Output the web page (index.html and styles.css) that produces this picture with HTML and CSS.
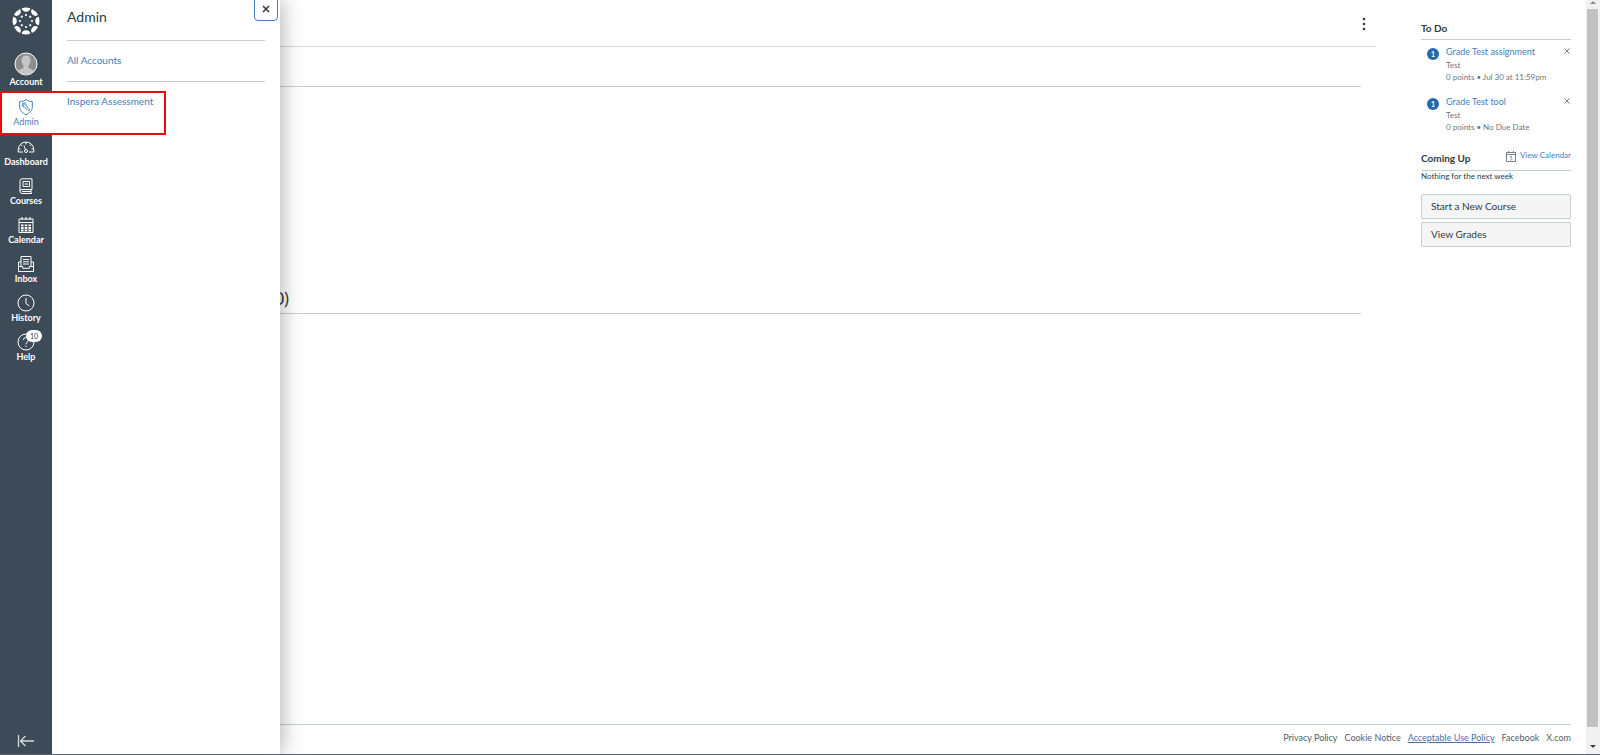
FILE: index.html
```
<!doctype html>
<html lang="en">
<head>
	<meta charset="utf-8">
	<meta name="viewport" content="width=device-width, initial-scale=1.0">
	<title>Dashboard</title>
	<link rel="stylesheet" href="styles.css">
</head>
<body>
<nav class="menu">
	<a href="#" class="logo" aria-label="Canvas">
		<svg width="28" height="28" viewBox="-14 -14 28 28" fill="#fff">
			<defs>
				<g id="petal">
					<path d="M-4.300 -12.700A13.400 13.400 0 0 1 4.300 -12.700A4.400 4.400 0 0 1 -4.300 -12.700Z"/>
					<circle cx="0" cy="-6" r="1.1"/>
				</g>
			</defs>
			<use href="#petal"/>
			<use href="#petal" transform="rotate(45)"/>
			<use href="#petal" transform="rotate(90)"/>
			<use href="#petal" transform="rotate(135)"/>
			<use href="#petal" transform="rotate(180)"/>
			<use href="#petal" transform="rotate(225)"/>
			<use href="#petal" transform="rotate(270)"/>
			<use href="#petal" transform="rotate(315)"/>
		</svg>
	</a>
	<a href="#" class="item account">
		<svg width="24" height="24" viewBox="0 0 24 24">
			<circle cx="12" cy="12" r="11" fill="#8d8d8d" stroke="#fff"/>
			<path d="M12 3.500c-3 0-4.600 2.200-4.400 5.300.1 2.300.9 3.800 2 4.900v1.700c-.6 1.300-4 1.500-5.800 3.500A11 11 0 0 0 20.200 18.900c-1.800-2-5.200-2.200-5.800-3.500v-1.700c1.100-1.100 1.900-2.600 2-4.900.2-3.100-1.400-5.300-4.400-5.300z" fill="#c6c6c6"/>
		</svg>
		<span>Account</span>
	</a>
	<a href="#" class="item active">
		<svg width="18" height="18" viewBox="0 0 18 18" fill="none" stroke="#3f7fc0">
			<path d="M9 1.500C7 3 5 3.600 2.700 3.600v5.200c0 3.700 2.600 6.300 6.300 7.900 3.700-1.600 6.300-4.200 6.300-7.900V3.600C13 3.600 11 3 9 1.500z"/>
			<path d="M5.500 5.500a2.200 2.200 0 0 1 3.600 2.200l3.300 3.400c.8 1-.5 2.200-1.400 1.400L7.700 9.200a2.200 2.200 0 0 1-2.600-2.500l1.400 1 1-1z"/>
		</svg>
		<span>Admin</span>
	</a>
	<a href="#" class="item">
		<svg width="18" height="18" viewBox="0 0 18 18" fill="none" stroke="#fff">
			<path d="M6 14H1.200v-2.200a7.800 7.800 0 0 1 15.600 0V14H12M9 4v2.500M3.700 6.400l1.700 1.700M14.300 6.400l-1.700 1.700M1.500 11h2M14.500 11h2M7 7.500l1.600 4.500"/>
			<circle cx="9" cy="13" r="1.500"/>
		</svg>
		<span>Dashboard</span>
	</a>
	<a href="#" class="item">
		<svg width="18" height="18" viewBox="0 0 18 18" fill="none" stroke="#fff">
			<path d="M15 12.500V1.800H5Q3 1.800 3 4v10.200q0 2.300 2 2.300h10M15 12.500H5q-2 0-2 1.700M14 12.500v4M5 14.500h9"/>
			<path d="M6 4.500h6.500v5H6zM7.500 7h3.500"/>
		</svg>
		<span>Courses</span>
	</a>
	<a href="#" class="item">
		<svg width="18" height="18" viewBox="0 0 18 18" fill="none" stroke="#fff">
			<path d="M2 3h14v13.500H2zM2 6.500h14M5 1v3M9 1v3M13 1v3"/>
			<path d="M4 9.300h10M4 12h10M4 14.500h10" stroke-width="1.800" stroke-dasharray="2.600 1.100"/>
		</svg>
		<span>Calendar</span>
	</a>
	<a href="#" class="item">
		<svg width="18" height="18" viewBox="0 0 18 18" fill="none" stroke="#fff">
			<path d="M4 11V1.500h10V11M6 4.500h6M6 6.800h6M6 9h6"/>
			<path d="M4 7H1.500v9.500h15V7H14M1.500 11.500h4.200v1.800h6.600v-1.800h4.200"/>
		</svg>
		<span>Inbox</span>
	</a>
	<a href="#" class="item">
		<svg width="18" height="18" viewBox="0 0 18 18" fill="none" stroke="#fff">
			<circle cx="9" cy="9" r="8"/>
			<path d="M9 4v5.500l3.500 2.500"/>
		</svg>
		<span>History</span>
	</a>
	<a href="#" class="item">
		<svg width="18" height="18" viewBox="0 0 18 18" fill="none" stroke="#fff">
			<circle cx="9" cy="9" r="8"/>
			<path d="M6.500 7a2.500 2.500 0 1 1 3.500 2.200q-1 .5-1 2M9 12.500v1.500"/>
		</svg>
		<span>Help</span>
		<b class="badge">10</b>
	</a>
	<button class="collapse" aria-label="Minimize navigation">
		<svg width="18" height="14" viewBox="0 0 18 14" fill="none" stroke="#d5d9dc" stroke-width="1.300">
			<path d="M1.500 1v12M3.500 7H17M8.500 2l-5 5 5 5"/>
		</svg>
	</button>
</nav>

<section class="tray">
	<button class="close" aria-label="Close">
		<svg width="8" height="8" viewBox="0 0 8 8" stroke="#2d3b45" stroke-width="1.500"><path d="M1 1l6 6M7 1L1 7"/></svg>
	</button>
	<h2>Admin</h2>
	<a href="#">All Accounts</a>
	<a href="#">Inspera Assessment</a>
</section>
<div class="highlight"></div>

<div class="page">
	<div class="columns">
		<main>
			<header>
				<button class="options" aria-label="Dashboard options">
					<svg width="4" height="14" viewBox="0 0 4 14" fill="#2d3b45"><circle cx="2" cy="2" r="1.300"/><circle cx="2" cy="7" r="1.300"/><circle cx="2" cy="12" r="1.300"/></svg>
				</button>
			</header>
			<div class="published"></div>
			<h2 class="unpublished">(0)</h2>
		</main>
		<aside>
			<h2>To Do</h2>
			<ul class="todo">
				<li>
					<b class="count">1</b>
					<div class="details">
						<a href="#">Grade Test assignment</a>
						<p>Test</p>
						<p>0 points • Jul 30 at 11:59pm</p>
					</div>
					<button aria-label="Ignore Test assignment">
						<svg width="6" height="6" viewBox="0 0 6 6" stroke="#73818c"><path d="M.5.5l5 5M5.500.5l-5 5"/></svg>
					</button>
				</li>
				<li>
					<b class="count">1</b>
					<div class="details">
						<a href="#">Grade Test tool</a>
						<p>Test</p>
						<p>0 points • No Due Date</p>
					</div>
					<button aria-label="Ignore Test tool">
						<svg width="6" height="6" viewBox="0 0 6 6" stroke="#73818c"><path d="M.5.5l5 5M5.500.5l-5 5"/></svg>
					</button>
				</li>
			</ul>
			<div class="coming">
				<h2>Coming Up</h2>
				<a href="#">
					<svg width="10" height="11" viewBox="0 0 10 11" fill="none" stroke="#73818c">
						<path d="M.5 1.500h9v9h-9zM.5 3.500h9M2.500 0v2M7.500 0v2"/>
						<path d="M3.800 5.500h2L5 7c1.500 0 1.300 2-.2 2H3.800" stroke-width=".8"/>
					</svg>
					<span>View Calendar</span>
				</a>
			</div>
			<p class="nothing">Nothing for the next week</p>
			<button class="wide">Start a New Course</button>
			<button class="wide">View Grades</button>
		</aside>
	</div>
	<footer>
		<a href="#">Privacy Policy</a>
		<a href="#">Cookie Notice</a>
		<a href="#" class="hovered">Acceptable Use Policy</a>
		<a href="#">Facebook</a>
		<a href="#">X.com</a>
	</footer>
</div>

<div class="scrollbar">
	<svg width="6" height="3" viewBox="0 0 6 3" fill="#8b8b8b"><path d="M0 3l3-3 3 3z"/></svg>
	<div class="thumb"></div>
	<svg width="6" height="3" viewBox="0 0 6 3" fill="#404040"><path d="M0 0l3 3 3-3z"/></svg>
</div>
</body>
</html>
```

FILE: styles.css
```
* {
	box-sizing: border-box;
}
body {
	margin: 0;
	height: 100vh;
	display: flex;
	position: relative;
	overflow: hidden;
	border-bottom: 1px solid #5a626b;
	background: #fff;
	color: #2d3b45;
	font-family: Lato, sans-serif;
	font-size: 10px;
}
h2, p, ul {
	margin: 0;
	padding: 0;
	font-weight: normal;
}
a {
	color: #3f7fc0;
	text-decoration: none;
}
button {
	padding: 0;
	border: 0;
	background: none;
	color: inherit;
	font: inherit;
}
svg {
	display: block;
	flex: none;
}

/* global navigation */
.menu {
	width: 52px;
	flex: none;
	display: flex;
	flex-direction: column;
	background: #3d4a57;
}
.logo {
	height: 46px;
	padding: 7px 12px;
}
.item {
	position: relative;
	height: 39px;
	padding-top: 3px;
	display: flex;
	flex-direction: column;
	align-items: center;
	color: #fff;
	font-size: 9px;
	font-weight: bold;
	line-height: 11px;
}
.account {
	height: 46px;
	padding-top: 6px;
}
.active {
	height: 43px;
	padding-top: 6px;
	background: #fff;
	color: #3f7fc0;
	font-weight: normal;
}
.badge {
	position: absolute;
	top: 0;
	left: 26px;
	width: 16px;
	border-radius: 6px;
	background: #fff;
	color: #2d3b45;
	font-size: 7px;
	font-weight: normal;
	line-height: 12px;
	text-align: center;
}
.collapse {
	margin-top: auto;
	padding: 0 17px 6px;
}

/* tray over the page */
.tray {
	position: absolute;
	top: 0;
	bottom: 0;
	left: 52px;
	width: 228px;
	padding: 0 15px;
	background: #fff;
	box-shadow: 2px 0 20px rgba(0, 0, 0, .3);
	clip-path: inset(0 -30px 0 0);
}
.tray h2 {
	height: 41px;
	padding-top: 7px;
	border-bottom: 1px solid #c7cdd1;
	font-size: 14px;
	line-height: 20px;
}
.tray a {
	display: block;
	height: 41px;
	padding-top: 12px;
	line-height: 14px;
}
.tray h2 + a {
	border-bottom: 1px solid #c7cdd1;
}
.close {
	position: absolute;
	top: -3px;
	right: 2px;
	width: 24px;
	height: 24px;
	padding: 0 7px;
	border: 1px solid #3f7fc0;
	border-radius: 4px;
}
.highlight {
	position: absolute;
	top: 91px;
	left: 0;
	width: 166px;
	height: 44px;
	border: 2px solid #e80c0c;
}

/* dashboard */
.page {
	flex: 1;
	display: flex;
	flex-direction: column;
	padding-right: 15px;
}
.columns {
	flex: 1;
	display: flex;
	gap: 45px;
}
main {
	flex: 1;
}
header {
	height: 47px;
	padding: 17px 10px 0;
	display: flex;
	justify-content: flex-end;
	align-items: flex-start;
	border-bottom: 1px solid #d5d9dc;
}
.published {
	height: 40px;
	margin-right: 15px;
	border-bottom: 1px solid #c7cdd1;
}
.unpublished {
	margin-right: 15px;
	padding: 199px 0 3px 217px;
	border-bottom: 1px solid #c7cdd1;
	font-size: 18px;
	line-height: 24px;
}
aside {
	width: 150px;
	padding-top: 20px;
}
aside h2 {
	font-size: 10px;
	font-weight: bold;
	line-height: 16px;
}
aside > h2 {
	padding-bottom: 3px;
	border-bottom: 1px solid #c7cdd1;
}
.todo {
	list-style: none;
}
.todo li {
	height: 50px;
	padding: 4px 1px 0 6px;
	display: flex;
	align-items: flex-start;
	gap: 7px;
}
.count {
	width: 12px;
	margin-top: 4px;
	border-radius: 6px;
	background: #2569ac;
	color: #fff;
	font-size: 7px;
	line-height: 12px;
	text-align: center;
}
.details {
	flex: 1;
	white-space: nowrap;
}
.details a {
	display: block;
	font-size: 9px;
	line-height: 15px;
}
.details p {
	color: #6b7780;
	font-size: 8px;
	line-height: 12px;
}
.todo button {
	padding-top: 4px;
}
.coming {
	height: 31px;
	padding-top: 10px;
	display: flex;
	justify-content: space-between;
	border-bottom: 1px solid #c7cdd1;
}
.coming a {
	display: flex;
	gap: 4px;
	font-size: 8px;
	line-height: 11px;
}
.coming svg {
	margin-top: 1px;
}
.nothing {
	padding-bottom: 12px;
	font-size: 8px;
	line-height: 11px;
}
.wide {
	display: block;
	width: 100%;
	height: 25px;
	margin-bottom: 3px;
	padding: 0 9px 2px;
	border: 1px solid #c7cdd1;
	border-radius: 2px;
	background: #f5f5f5;
	text-align: left;
}
footer {
	height: 30px;
	padding-top: 6px;
	display: flex;
	justify-content: flex-end;
	gap: 7px;
	border-top: 1px solid #c7cdd1;
	font-size: 9px;
	line-height: 14px;
}
footer a {
	color: #556069;
}
footer .hovered {
	color: #4d6ea6;
	text-decoration: underline;
}

.scrollbar {
	width: 14px;
	padding: 1px 2px 6px 1px;
	display: flex;
	flex-direction: column;
	align-items: center;
	background: #f1f1f1;
}
.thumb {
	flex: 1;
	width: 100%;
	margin: 5px 0 18px;
	background: #c1c1c1;
}
```
